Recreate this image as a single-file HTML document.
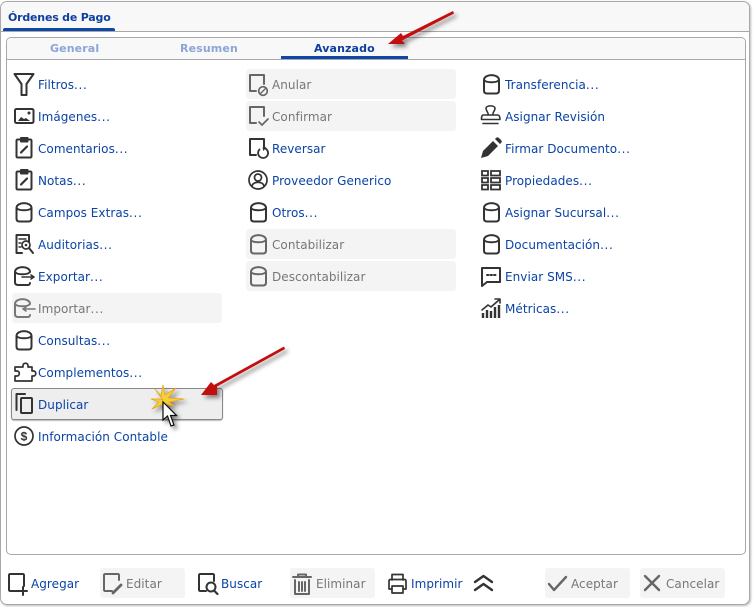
<!DOCTYPE html>
<html><head><meta charset="utf-8"><style>
html,body{margin:0;padding:0;background:#fff}
body{width:753px;height:607px;position:relative;overflow:hidden;font-family:"DejaVu Sans","Liberation Sans",sans-serif;font-size:12px}
div{position:absolute;box-sizing:border-box}
.t{color:#0b44a6;line-height:16px;height:16px;white-space:nowrap;margin-top:1px;letter-spacing:.05px}
.t span{letter-spacing:.65px}
.d{color:#777}
.g{background:#f4f4f4;border-radius:3px;height:30px}
.b{top:42px;font-size:11px;font-weight:bold;line-height:14px;letter-spacing:.12px}
svg{position:absolute;left:0;top:0}
</style></head><body>
<div style="left:0;top:1px;width:750px;height:604px;border:1px solid #a8a8a8;border-radius:7px;box-shadow:1px 1px 2px #bbb;background:#fff"></div>
<div style="left:1px;top:2px;width:748px;height:30px;background:#f8f8f8;border-bottom:1px solid #a8a8a8;border-radius:6px 6px 0 0"></div>
<div style="left:8px;top:10px;color:#0d3f9f;font-size:11px;font-weight:bold;line-height:15px;white-space:nowrap;letter-spacing:-.2px">Órdenes de Pago</div>
<div style="left:3px;top:28px;width:112px;height:3px;background:#0d47a8;border-radius:2px 2px 0 0"></div>
<div style="left:6px;top:37px;width:740px;height:518px;border:1px solid #a8a8a8;border-radius:5px;background:#fff"></div>
<div style="left:7px;top:38px;width:738px;height:22px;background:#f8f8f8;border-bottom:1px solid #a8a8a8;border-radius:4px 4px 0 0"></div>
<div class="b" style="left:50px;color:#8ba5d6">General</div>
<div class="b" style="left:180px;color:#8ba5d6">Resumen</div>
<div class="b" style="left:314px;color:#0d3f9f">Avanzado</div>
<div style="left:281px;top:56px;width:127px;height:3px;background:#0d47a8"></div>

<div class="g" style="left:12px;top:293px;width:210px"></div>
<div class="g" style="left:246px;top:69px;width:210px"></div>
<div class="g" style="left:246px;top:101px;width:210px"></div>
<div class="g" style="left:246px;top:229px;width:210px"></div>
<div class="g" style="left:246px;top:261px;width:210px"></div>
<div style="left:11px;top:388px;width:212px;height:32px;background:#eee;border:1px solid #888;border-radius:3px;box-shadow:0 1px 1px #bbb"></div>
<div class="g" style="left:100px;top:568px;width:85px"></div>
<div class="g" style="left:290px;top:568px;width:85px"></div>
<div class="g" style="left:545px;top:568px;width:85px"></div>
<div class="g" style="left:640px;top:568px;width:85px"></div>

<div class="t" style="left:38px;top:76px">Filtros<span>...</span></div>
<div class="t" style="left:38px;top:108px">Imágenes<span>...</span></div>
<div class="t" style="left:38px;top:140px">Comentarios<span>...</span></div>
<div class="t" style="left:38px;top:172px">Notas<span>...</span></div>
<div class="t" style="left:38px;top:204px">Campos Extras<span>...</span></div>
<div class="t" style="left:38px;top:236px">Auditorias<span>...</span></div>
<div class="t" style="left:38px;top:268px">Exportar<span>...</span></div>
<div class="t d" style="left:38px;top:300px">Importar<span>...</span></div>
<div class="t" style="left:38px;top:332px">Consultas<span>...</span></div>
<div class="t" style="left:38px;top:364px">Complementos<span>...</span></div>
<div class="t" style="left:38px;top:396px">Duplicar</div>
<div class="t" style="left:38px;top:428px">Información Contable</div>

<div class="t d" style="left:272px;top:76px">Anular</div>
<div class="t d" style="left:272px;top:108px">Confirmar</div>
<div class="t" style="left:272px;top:140px">Reversar</div>
<div class="t" style="left:272px;top:172px">Proveedor Generico</div>
<div class="t" style="left:272px;top:204px">Otros<span>...</span></div>
<div class="t d" style="left:272px;top:236px">Contabilizar</div>
<div class="t d" style="left:272px;top:268px">Descontabilizar</div>

<div class="t" style="left:505px;top:76px">Transferencia<span>...</span></div>
<div class="t" style="left:505px;top:108px">Asignar Revisión</div>
<div class="t" style="left:505px;top:140px">Firmar Documento<span>...</span></div>
<div class="t" style="left:505px;top:172px">Propiedades<span>...</span></div>
<div class="t" style="left:505px;top:204px">Asignar Sucursal<span>...</span></div>
<div class="t" style="left:505px;top:236px">Documentación<span>...</span></div>
<div class="t" style="left:505px;top:268px">Enviar SMS<span>...</span></div>
<div class="t" style="left:505px;top:300px">Métricas<span>...</span></div>

<div class="t" style="left:31px;top:575px">Agregar</div>
<div class="t d" style="left:126px;top:575px">Editar</div>
<div class="t" style="left:221px;top:575px">Buscar</div>
<div class="t d" style="left:316px;top:575px">Eliminar</div>
<div class="t" style="left:411px;top:575px">Imprimir</div>
<div class="t d" style="left:571px;top:575px">Aceptar</div>
<div class="t d" style="left:666px;top:575px">Cancelar</div>

<svg width="753" height="607" viewBox="0 0 753 607" fill="none" stroke="#333" stroke-width="2" stroke-linejoin="round" stroke-linecap="round">
<defs>
<g id="cyl"><path d="M1 5C1 -1.500 16 -1.500 16 5V15.500c0 2-1 3-3 3H4c-2 0-3-1-3-3z"/><path d="M1 5c2 3 13 3 15 0"/></g>
<g id="clip"><path d="M5 3H1.500c-.5 0-1 .5-1 1V20c0 .5.5 1 1 1h13c.5 0 1-.5 1-1V4c0-.5-.5-1-1-1H11.500"/><path d="M5 1.500h6.500v3.500H5z" fill="#333"/><path d="M5 16l6-6" stroke-width="2.200"/></g>
<filter id="sh" x="-30%" y="-30%" width="170%" height="170%"><feDropShadow dx="3" dy="3" stdDeviation="2" flood-color="#000" flood-opacity=".45"/></filter>
</defs>

<!-- col 1 -->
<path d="M14.500 74H33.500L26.500 84V95H21.500V84Z"/>
<rect x="15" y="109" width="18.500" height="14" rx="1.500"/>
<path d="M18 121l3-4 3 2 2-1 4 3z" fill="#333" stroke="none"/><circle cx="29" cy="113" r="1.500" fill="#333" stroke="none"/>
<use href="#clip" x="16" y="136.500"/>
<use href="#clip" x="16" y="168.500"/>
<use href="#cyl" x="15.500" y="203"/>
<path d="M29 242V235H16.500V253H22"/><path d="M19 239h7M19 243h2M19 247h2" stroke-width="1.400"/><circle cx="26" cy="245" r="4" stroke-width="1.700"/><circle cx="26" cy="245" r="1.300" fill="#333" stroke="none"/><path d="M29 248l4 5" stroke-width="2"/>
<path d="M30 272C30 265.500 15 265.500 15 272V282c0 2 1 3 3 3H28c1 0 2-1 2-2M15 272c2 3 13 3 15 0" /><path d="M22 277H34M31 275l3 2-3 2" stroke-width="1.600"/>
<g stroke="#777"><path d="M30 304C30 297.500 15 297.500 15 304V314c0 2 1 3 3 3H28c1 0 2-1 2-2M15 304c2 3 13 3 15 0"/><path d="M23 309H35M26 307l-3 2 3 2" stroke-width="1.600"/></g>
<use href="#cyl" x="15.500" y="331"/>
<path d="M20 367h3v-1.500c0-3 5-3 5 0V367h4v4h1.500c3 0 3 5 0 5H32v5H15v-5h2c3 0 3-5 0-5h-2v-4z" stroke-width="1.700"/>
<path d="M25 394H16.500V410"/><rect x="21" y="398" width="11" height="15" rx="1"/>
<circle cx="24" cy="436" r="9" stroke-width="1.700"/>
<text x="24" y="440.500" text-anchor="middle" font-family="Liberation Sans,sans-serif" font-size="12" font-weight="bold" fill="#333" stroke="none">$</text>

<!-- col 2 -->
<g stroke="#666"><path d="M256 91H250V75H264V84"/><circle cx="263" cy="91" r="4.300" stroke-width="1.700"/><path d="M260.500 93.500l5-5" stroke-width="1.400"/>
<path d="M256 123H250V107H264V116"/><path d="M259 122l3 3 6-6" stroke-width="1.700"/></g>
<path d="M256 155H250V139H264V147"/><path d="M259.500 149.500a5 5 0 1 0 4-1.500" stroke-width="1.800"/><path d="M263 145v6l3.500-3z" fill="#333" stroke="none"/>
<circle cx="258" cy="180" r="9" stroke-width="1.700"/><circle cx="258" cy="177.500" r="3.500" stroke-width="1.700"/><path d="M252 186c1-5 11-5 12 0" stroke-width="1.700"/>
<use href="#cyl" x="250" y="203"/>
<use href="#cyl" x="250" y="235" stroke="#666"/>
<use href="#cyl" x="250" y="267" stroke="#666"/>

<!-- col 3 -->
<use href="#cyl" x="483" y="75"/>
<path d="M488 115c1-2-2-4-2-6.500 0-3.500 9-3.500 9 0 0 2.500-3 4.500-2 6.500M483.500 115h14c1.500 0 2.500 1 2.500 4.500H481.500c0-3.500 .5-4.500 2-4.500zM483 123.500h15" stroke-width="1.600"/>
<path d="M481 158l2-7 10-10 5 5-10 10zM495 139l1-1c1-1 2-1 3 0l2 2c1 1 1 2 0 3l-1 1z" fill="#333" stroke="none"/>
<path d="M482 171h6v4.500h-6zM491 171h9v4.500h-9zM482 178h6v4.500h-6zM491 178h9v4.500h-9zM482 185h6v4.500h-6zM491 185h9v4.500h-9z" stroke-width="1.800" stroke-linejoin="miter"/>
<use href="#cyl" x="483" y="235"/>
<use href="#cyl" x="483" y="203"/>
<path d="M482 268H500V282H487L482 286Z"/><path d="M487 275h1.500M490.500 275h1.500M494 275h1.500" stroke-width="2"/>
<path d="M482 310l6-5 3 2 8-7M495 299h5v4" stroke-width="1.600"/>
<path d="M483 313v5M487 310v8M491 311v7M495 307v11M499 305v13" stroke-width="2.400" stroke-linecap="butt"/>

<!-- footer -->
<path d="M19 591H10c-.5 0-1-.5-1-1V575c0-.5.5-1 1-1H23c.5 0 1 .5 1 1v11M23 587v8M19 591h8"/>
<g stroke="#666"><path d="M112 591H105c-.5 0-1-.5-1-1V575c0-.5.5-1 1-1H118c.5 0 1 .5 1 1v5"/><path d="M113 593l8-8" stroke-width="2.800"/></g>
<path d="M206 591H200c-.5 0-1-.5-1-1V575c0-.5.5-1 1-1H213c.5 0 1 .5 1 1v6"/><circle cx="211" cy="587" r="4.500"/><path d="M214.500 591l3 3" stroke-width="2.200"/>
<g stroke="#666"><path d="M293 577H311M298 577v-2.500h8V577M295 580V594H309V580M299 582v9M302 582v9M305 582v9"/></g>
<path d="M392 580v-5.500h11v5.500M392 589h-3v-8c0-1 .5-1.500 1.500-1.500h14c1 0 1.500.5 1.500 1.500v8h-3M392 586h11v7h-11z" stroke-width="1.700"/>
<path d="M475 582l8.500-6 8.500 6M475 590l8.500-6 8.500 6" stroke-width="2.400"/>
<path d="M549 584l5 6 12-13" stroke="#666" stroke-width="2.400"/>
<path d="M645 576l14 14M659 576l-14 14" stroke="#666" stroke-width="2.400"/>

<!-- arrows -->
<g filter="url(#sh)" stroke="none">
<path d="M453 11l1 2.500-52 27 3 3.500-17 0 13-11 2 3z" fill="#c40d0d"/>
<path d="M284 346.500l1 2.500-68 37.500 0 8.500-16 0 10-13 3 3z" fill="#c40d0d"/>
</g>
<!-- star -->
<g filter="url(#sh)"><path d="M163 400L155 389 161 396 163 385 165 395 176 388 168 398 184 399 169 402 174 406 163 404 152 409 159 402 151 399 160 399z" fill="#f6cf3e" stroke="#e8a713" stroke-width=".8"/></g>
<g filter="url(#sh)"><path d="M163 402V420L167.500 416 171 426 174 425 170.500 415.500H176.500Z" fill="#fff" stroke="#111" stroke-width="1.200" stroke-linejoin="miter"/></g>
</svg>
</body></html>
